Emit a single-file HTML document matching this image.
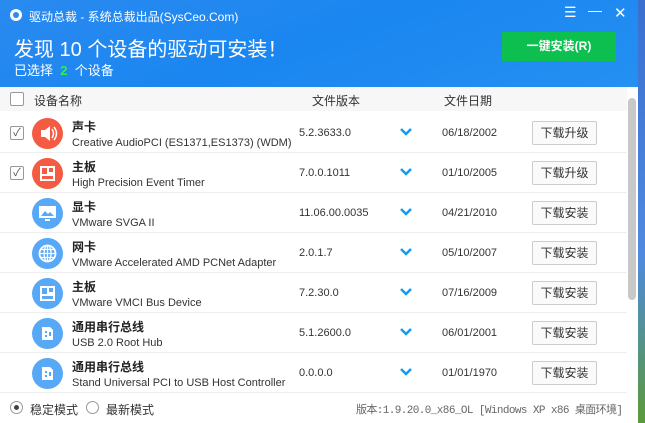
<!DOCTYPE html>
<html><head><meta charset="utf-8"><style>
*{margin:0;padding:0;box-sizing:border-box}
body{width:645px;height:423px;overflow:hidden;background:linear-gradient(180deg,#3a6fd0 0%,#4f8ae0 60%,#5b9a3a 100%);font-family:"Liberation Sans","WenQuanYi Zen Hei","Noto Sans CJK SC",sans-serif;position:relative}
.win{position:absolute;left:0;top:0;width:638px;height:423px;background:#fff}
.hd{position:absolute;left:0;top:0;width:638px;height:87px;background:linear-gradient(160deg,#2a8af0,#1a86f0 50%,#2590f2)}
.t{position:absolute;color:#fff;white-space:nowrap}
.btn1{position:absolute;left:502px;top:32px;width:114px;height:29px;background:#0dbf4f;color:#fff;font-size:12px;font-weight:bold;text-align:center;line-height:29px}
.th{position:absolute;left:0;top:87px;width:627px;height:24px;background:#f7f7f7;font-size:12px;color:#333}
.cb{position:absolute;width:14px;height:14px;border:1px solid #999;background:#fff;border-radius:2px}
.row{position:absolute;left:0;width:627px;height:40px;border-bottom:1px solid #eee;font-size:11px;color:#333}
.ic{position:absolute;left:32px;top:5px;width:31px;height:31px;border-radius:50%}
.r{background:#f55a42}.b{background:#58a8f8}
.ttl{position:absolute;left:72px;top:5px;font-size:12px;font-weight:bold;color:#222}
.sub{position:absolute;left:72px;top:24px;font-size:11px;color:#333;white-space:nowrap}
.ver{position:absolute;left:299px;top:14px}
.chev{position:absolute;left:400px;top:12px}
.dt{position:absolute;left:442px;top:14px}
.db{position:absolute;left:532px;top:8px;width:65px;height:24px;border:1px solid #ccc;border-radius:2px;background:#fafafa;text-align:center;line-height:22px;font-size:12px;color:#333}
</style></head><body>
<div class="win">
<div class="hd">
<svg style="position:absolute;left:9px;top:8px" width="14" height="14" viewBox="0 0 14 14"><circle cx="7" cy="7" r="6" fill="#fff"/><circle cx="7" cy="7" r="3" fill="#2a8af0"/></svg>
<div class="t" style="left:29px;top:8px;font-size:12px">驱动总裁 - 系统总裁出品(SysCeo.Com)</div>
<div class="t" style="left:564px;top:4px;font-size:14px">☰</div>
<div class="t" style="left:588px;top:2px;font-size:14px">—</div>
<div class="t" style="left:614px;top:4px;font-size:15px">✕</div>
<div class="t" style="left:14px;top:33px;font-size:20px">发现 10 个设备的驱动可安装！</div>
<div class="t" style="left:14px;top:60px;font-size:13px">已选择 <span style="color:#2ef04a;font-weight:bold">&nbsp;2&nbsp;</span> 个设备</div>
<div class="btn1">一键安装(R)</div>
</div>
<div class="th"><div class="cb" style="left:10px;top:5px"></div>
<span style="position:absolute;left:34px;top:5px">设备名称</span>
<span style="position:absolute;left:312px;top:5px">文件版本</span>
<span style="position:absolute;left:444px;top:5px">文件日期</span></div>

<div class="row" style="top:113px"><div class="cb" style="left:10px;top:13px;color:#555;font-size:11px;line-height:12px;text-align:center">✓</div><div class="ic r"><svg width="31" height="31"><path d="M9 12h4l5-4v15l-5-4H9z" fill="#fff"/><path d="M20 11q3 4.5 0 9M22 9q5 6.5 0 13" stroke="#fff" stroke-width="1.5" fill="none"/></svg></div><div class="ttl">声卡</div><div class="sub">Creative AudioPCI (ES1371,ES1373) (WDM)</div><div class="ver">5.2.3633.0</div><svg class="chev" width="12" height="14"><path d="M1 4l5 5 5-5" stroke="#1a9ae8" stroke-width="2.5" fill="none"/></svg><div class="dt">06/18/2002</div><div class="db">下载升级</div></div>
<div class="row" style="top:153px"><div class="cb" style="left:10px;top:13px;color:#555;font-size:11px;line-height:12px;text-align:center">✓</div><div class="ic r"><svg width="31" height="31"><rect x="8" y="8" width="15" height="15" fill="#fff"/><rect x="10" y="10" width="5" height="6" fill="#f55a42"/><rect x="17" y="10" width="4" height="4" fill="#f55a42"/><rect x="10" y="18" width="11" height="3" fill="#f55a42"/></svg></div><div class="ttl">主板</div><div class="sub">High Precision Event Timer</div><div class="ver">7.0.0.1011</div><svg class="chev" width="12" height="14"><path d="M1 4l5 5 5-5" stroke="#1a9ae8" stroke-width="2.5" fill="none"/></svg><div class="dt">01/10/2005</div><div class="db">下载升级</div></div>
<div class="row" style="top:193px"><div class="ic b"><svg width="31" height="31"><rect x="7" y="8" width="17" height="12" fill="#fff"/><path d="M9 18l4-5 3 3 2-2 4 4z" fill="#58a8f8"/><rect x="13" y="21" width="5" height="2" fill="#fff"/></svg></div><div class="ttl">显卡</div><div class="sub">VMware SVGA II</div><div class="ver">11.06.00.0035</div><svg class="chev" width="12" height="14"><path d="M1 4l5 5 5-5" stroke="#1a9ae8" stroke-width="2.5" fill="none"/></svg><div class="dt">04/21/2010</div><div class="db">下载安装</div></div>
<div class="row" style="top:233px"><div class="ic b"><svg width="31" height="31"><circle cx="15.5" cy="15.5" r="8" fill="none" stroke="#fff" stroke-width="1.8"/><path d="M7.5 15.5h16M15.5 7.5v16M9 11.5h13M9 19.5h13" stroke="#fff" stroke-width="1.3"/><ellipse cx="15.5" cy="15.5" rx="3.5" ry="8" fill="none" stroke="#fff" stroke-width="1.3"/></svg></div><div class="ttl">网卡</div><div class="sub">VMware Accelerated AMD PCNet Adapter</div><div class="ver">2.0.1.7</div><svg class="chev" width="12" height="14"><path d="M1 4l5 5 5-5" stroke="#1a9ae8" stroke-width="2.5" fill="none"/></svg><div class="dt">05/10/2007</div><div class="db">下载安装</div></div>
<div class="row" style="top:273px"><div class="ic b"><svg width="31" height="31"><rect x="8" y="8" width="15" height="15" fill="#fff"/><rect x="10" y="10" width="5" height="6" fill="#58a8f8"/><rect x="17" y="10" width="4" height="4" fill="#58a8f8"/><rect x="10" y="18" width="11" height="3" fill="#58a8f8"/></svg></div><div class="ttl">主板</div><div class="sub">VMware VMCI Bus Device</div><div class="ver">7.2.30.0</div><svg class="chev" width="12" height="14"><path d="M1 4l5 5 5-5" stroke="#1a9ae8" stroke-width="2.5" fill="none"/></svg><div class="dt">07/16/2009</div><div class="db">下载安装</div></div>
<div class="row" style="top:313px"><div class="ic b"><svg width="31" height="31"><path d="M10 9h8l3 3v10H10z" fill="#fff"/><rect x="13" y="13" width="2" height="2" fill="#58a8f8"/><rect x="13" y="17" width="2" height="2" fill="#58a8f8"/><rect x="17" y="14" width="2" height="4" fill="#58a8f8"/></svg></div><div class="ttl">通用串行总线</div><div class="sub">USB 2.0 Root Hub</div><div class="ver">5.1.2600.0</div><svg class="chev" width="12" height="14"><path d="M1 4l5 5 5-5" stroke="#1a9ae8" stroke-width="2.5" fill="none"/></svg><div class="dt">06/01/2001</div><div class="db">下载安装</div></div>
<div class="row" style="top:353px"><div class="ic b"><svg width="31" height="31"><path d="M10 9h8l3 3v10H10z" fill="#fff"/><rect x="13" y="13" width="2" height="2" fill="#58a8f8"/><rect x="13" y="17" width="2" height="2" fill="#58a8f8"/><rect x="17" y="14" width="2" height="4" fill="#58a8f8"/></svg></div><div class="ttl">通用串行总线</div><div class="sub">Stand Universal PCI to USB Host Controller</div><div class="ver">0.0.0.0</div><svg class="chev" width="12" height="14"><path d="M1 4l5 5 5-5" stroke="#1a9ae8" stroke-width="2.5" fill="none"/></svg><div class="dt">01/01/1970</div><div class="db">下载安装</div></div>

<div style="position:absolute;left:628px;top:98px;width:8px;height:202px;background:#c8c8c8;border-radius:4px"></div>
<div style="position:absolute;left:0;top:393px;width:638px;height:30px;font-size:12px;color:#333">
<div style="position:absolute;left:10px;top:8px;width:13px;height:13px;border:1px solid #999;border-radius:50%;background:#fff"><div style="margin:3px;width:5px;height:5px;border-radius:50%;background:#444"></div></div>
<span style="position:absolute;left:30px;top:8px">稳定模式</span>
<div style="position:absolute;left:86px;top:8px;width:13px;height:13px;border:1px solid #999;border-radius:50%;background:#fff"></div>
<span style="position:absolute;left:106px;top:8px">最新模式</span>
<span style="position:absolute;left:356px;top:8px;font-size:11px;color:#666;font-family:'Liberation Mono','WenQuanYi Zen Hei',monospace;letter-spacing:-0.6px">版本:1.9.20.0_x86_OL [Windows XP x86 桌面环境]</span>
</div>
</div>
</body></html>
